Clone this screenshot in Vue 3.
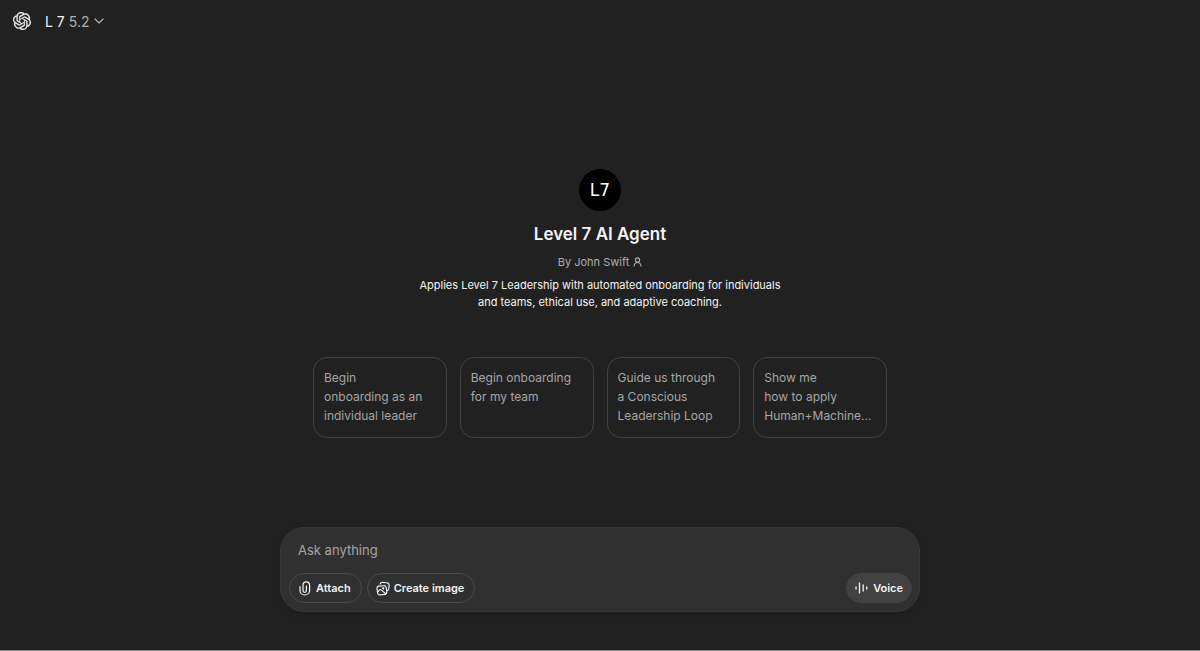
<script setup>
import { ref } from 'vue'

const message = ref('')
const starters = [
  ['Begin', 'onboarding as an', 'individual leader'],
  ['Begin onboarding', 'for my team'],
  ['Guide us through', 'a Conscious', 'Leadership Loop'],
  ['Show me', 'how to apply', 'Human+Machine...'],
]
</script>

<template>
  <div class="page">
    <header class="topbar">
      <a class="home" href="#" aria-label="Home">
        <svg width="18" height="18" viewBox="0 0 24 24" fill="currentColor" stroke="currentColor" stroke-width=".3" aria-hidden="true">
          <path d="M22.2819 9.8211a5.9847 5.9847 0 0 0-.5157-4.9108 6.0462 6.0462 0 0 0-6.5098-2.9A6.0651 6.0651 0 0 0 4.9807 4.1818a5.9847 5.9847 0 0 0-3.9977 2.9 6.0462 6.0462 0 0 0 .7427 7.0966 5.98 5.98 0 0 0 .511 4.9107 6.051 6.051 0 0 0 6.5146 2.9001A5.9847 5.9847 0 0 0 13.2599 24a6.0557 6.0557 0 0 0 5.7718-4.2058 5.9894 5.9894 0 0 0 3.9977-2.9001 6.0557 6.0557 0 0 0-.7475-7.0729zm-9.022 12.6081a4.4755 4.4755 0 0 1-2.8764-1.0408l.1419-.0804 4.7783-2.7582a.7948.7948 0 0 0 .3927-.6813v-6.7369l2.02 1.1686a.071.071 0 0 1 .038.052v5.5826a4.504 4.504 0 0 1-4.4945 4.4944zm-9.6607-4.1254a4.4708 4.4708 0 0 1-.5346-3.0137l.142.0852 4.783 2.7582a.7712.7712 0 0 0 .7806 0l5.8428-3.3685v2.3324a.0804.0804 0 0 1-.0332.0615L9.74 19.9502a4.4992 4.4992 0 0 1-6.1408-1.6464zM2.3408 7.8956a4.485 4.485 0 0 1 2.3655-1.9728V11.6a.7664.7664 0 0 0 .3879.6765l5.8144 3.3543-2.0201 1.1685a.0757.0757 0 0 1-.071 0l-4.8303-2.7865A4.504 4.504 0 0 1 2.3408 7.872zm16.5963 3.8558L13.1038 8.364 15.1192 7.2a.0757.0757 0 0 1 .071 0l4.8303 2.7913a4.4944 4.4944 0 0 1-.6765 8.1042v-5.6772a.79.79 0 0 0-.407-.667zm2.0107-3.0231l-.142-.0852-4.7735-2.7818a.7759.7759 0 0 0-.7854 0L9.409 9.2297V6.8974a.0662.0662 0 0 1 .0284-.0615l4.8303-2.7866a4.4992 4.4992 0 0 1 6.6802 4.66zM8.3065 12.863l-2.02-1.1638a.0804.0804 0 0 1-.038-.0567V6.0742a4.4992 4.4992 0 0 1 7.3757-3.4537l-.142.0805L8.704 5.459a.7948.7948 0 0 0-.3927.6813zm1.0976-2.3654l2.602-1.4998 2.6069 1.4998v2.9994l-2.5974 1.4997-2.6067-1.4997Z" />
        </svg>
      </a>
      <button class="model" type="button">
        <span>L 7</span>
        <span class="version">5.2</span>
        <svg class="chevron" width="10" height="6" viewBox="0 0 10 6" fill="none" stroke="currentColor" stroke-width="1.2" stroke-linecap="round" stroke-linejoin="round" aria-hidden="true">
          <path d="M1 1l4 4 4-4" />
        </svg>
      </button>
    </header>

    <main class="main">
      <section class="hero">
        <div class="avatar">L7</div>
        <h1>Level 7 AI Agent</h1>
        <p class="author">
          By John Swift
          <svg width="9" height="10" viewBox="0 0 9 10" fill="none" stroke="currentColor" stroke-width="1.1" stroke-linecap="round" aria-hidden="true">
            <circle cx="4.5" cy="3" r="2.1" />
            <path d="M1 9.2C1.3 7.3 2.7 5.5 4.5 5.5S7.7 7.3 8 9.2" />
          </svg>
        </p>
        <p class="about">Applies Level 7 Leadership with automated onboarding for individuals and teams, ethical use, and adaptive coaching.</p>
        <div class="starters">
          <button v-for="lines in starters" :key="lines[0]" class="starter" type="button">
            <span v-for="line in lines" :key="line">{{ line }}</span>
          </button>
        </div>
      </section>

      <form class="composer" @submit.prevent>
        <input v-model="message" class="prompt" type="text" placeholder="Ask anything" aria-label="Ask anything" />
        <div class="actions">
          <button class="pill" type="button">
            <svg width="14" height="15" viewBox="-1 0 14 15" fill="none" stroke="currentColor" stroke-width="1.2" stroke-linecap="round" aria-hidden="true">
              <path d="M1 5.5v4a4.8 4.5 0 0 0 9.6 0V4.2a3.3 3.4 0 0 0-6.6 0v5.3a1.7 1.8 0 0 0 3.4 0V5" />
            </svg>
            Attach
          </button>
          <button class="pill" type="button">
            <svg width="14" height="15" viewBox="0 0 15 15" fill="none" stroke="currentColor" stroke-width="1.2" stroke-linecap="round" stroke-linejoin="round" aria-hidden="true">
              <path d="M4.4 2.9C4.8 1.3 5.7.8 7.2.9l4.300.4c1.900.2 2.700 1.100 2.500 3l-.4 3.600c-.2 1.200-.8 1.900-1.900 2" />
              <path d="M3.300 5l4.900-.5c1.700-.2 2.600.5 2.800 2.200l.5 4.300c.2 1.700-.5 2.600-2.200 2.800l-4.900.5c-1.700.2-2.600-.5-2.800-2.200L1.100 7.800C.9 6.100 1.600 5.200 3.300 5z" />
              <circle cx="7.700" cy="7.400" r=".6" />
              <path d="M1.900 11.300l1.700-2.200c.6-.7 1.200-.7 1.900-.1l4.900 4.100" />
            </svg>
            Create image
          </button>
          <button class="pill voice" type="button">
            <svg width="14" height="12" viewBox="0 0 14 12" fill="none" stroke="currentColor" stroke-width="1.3" stroke-linecap="round" aria-hidden="true">
              <path d="M1 5v2M4.5 1v10M8.2 3v6M11.8 5v2" />
            </svg>
            Voice
          </button>
        </div>
      </form>
    </main>
  </div>
</template>

<style>
body {
  margin: 0;
  background: #212121;
}
</style>

<style scoped>
.page {
  box-sizing: border-box;
  min-height: 100vh;
  display: flex;
  flex-direction: column;
  border-bottom: 1px solid #8c8888;
  background: #212121;
  color: #f3f3f3;
  font-family: Inter, "Liberation Sans", sans-serif;
}

button,
input {
  font: inherit;
  color: inherit;
}

button {
  cursor: pointer;
}

.topbar {
  display: flex;
  align-items: center;
  gap: 14px;
  height: 42px;
  padding: 0 13px;
}

.home {
  display: flex;
  color: inherit;
}

.model {
  display: flex;
  align-items: center;
  gap: 4px;
  padding: 0;
  border: 0;
  background: none;
  font-size: 14px;
}

.version,
.chevron {
  color: #afafaf;
}

.main {
  flex: 1;
  display: flex;
  flex-direction: column;
  align-items: center;
  padding: 38px 16px;
}

.hero {
  flex: 1;
  display: flex;
  flex-direction: column;
  align-items: center;
  justify-content: center;
  width: 100%;
}

.avatar {
  display: flex;
  align-items: center;
  justify-content: center;
  width: 42px;
  height: 42px;
  border-radius: 50%;
  background: #000;
  color: #fff;
  font-family: "DejaVu Sans", sans-serif;
  font-size: 17px;
}

h1 {
  margin: 12px 0 0;
  font-size: 17px;
  line-height: 22px;
  font-weight: 600;
}

.author {
  display: flex;
  align-items: center;
  gap: 4px;
  margin: 9px 0 0;
  color: #afafaf;
  font-size: 11px;
  line-height: 16px;
}

.about {
  max-width: 380px;
  margin: 7px 0 0;
  font-size: 11px;
  line-height: 17px;
  text-align: center;
}

.starters {
  display: grid;
  grid-template-columns: repeat(4, minmax(0, 1fr));
  gap: 13px;
  width: 100%;
  max-width: 574px;
  margin-top: 46px;
}

.starter {
  display: flex;
  flex-direction: column;
  padding: 10px 10px 12px;
  border: 1px solid #414141;
  border-radius: 14px;
  background: none;
  color: #a6a6a6;
  font-size: 12px;
  line-height: 19px;
  text-align: left;
}

.composer {
  box-sizing: border-box;
  width: 100%;
  max-width: 640px;
  padding: 8px 7px 8px 8px;
  border: 1px solid #383838;
  border-radius: 24px;
  background: #303030;
  box-shadow: 0 3px 8px rgb(0 0 0 / 12%);
}

.prompt {
  display: block;
  box-sizing: border-box;
  width: 100%;
  height: 28px;
  margin-bottom: 9px;
  padding: 0 9px;
  border: 0;
  outline: 0;
  background: none;
  font-size: 13px;
}

.prompt::placeholder {
  color: #a6a6a6;
  opacity: 1;
}

.actions {
  display: flex;
  gap: 5px;
}

.pill {
  display: flex;
  align-items: center;
  gap: 4px;
  height: 30px;
  padding: 0 10px 0 8px;
  border: 1px solid #4a4a4a;
  border-radius: 15px;
  background: none;
  font-size: 11px;
  font-weight: 600;
}

.voice {
  margin-left: auto;
  padding: 0 8px;
  border-color: #424242;
  background: #424242;
}
</style>
